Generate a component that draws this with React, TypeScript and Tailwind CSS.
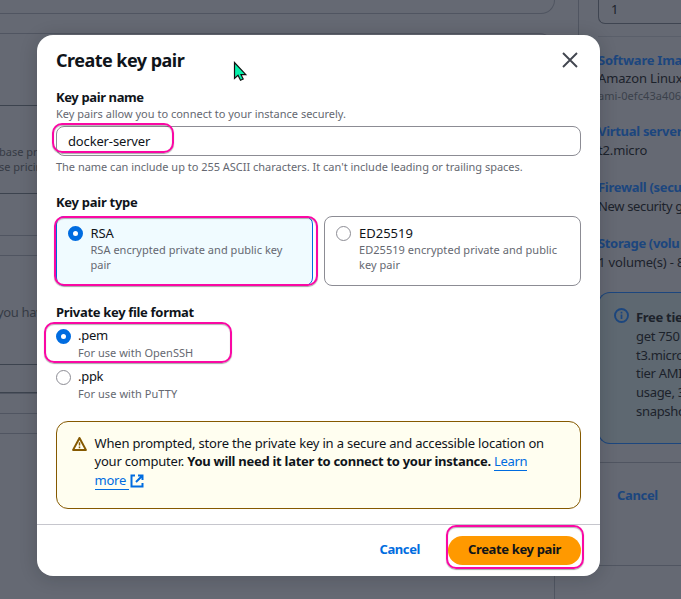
import type { ReactNode } from "react";

function RadioMark({ checked = false }: { checked?: boolean }) {
  return (
    <div className="flex h-[15px] w-[15px]">
      {checked ? (
        <span className="h-[15px] w-[15px] shrink-0 rounded-full border-[5px] border-[#006ce0] bg-white" />
      ) : (
        <span className="h-[15px] w-[15px] shrink-0 rounded-full border-[1.8px] border-[#8c8c94] bg-white" />
      )}
    </div>
  );
}

function Label({ children, className }: { children: ReactNode; className: string }) {
  return <div className={`h-[18px] text-[13px] font-bold leading-[18px] text-[#0f141a] ${className}`}>{children}</div>;
}

function WarningIcon() {
  return (
    <svg width="16" height="16" viewBox="0 0 16 16" fill="none" stroke="#855900" strokeLinejoin="round">
      <path d="M7.5 2 1.1 13.9h12.8L7.5 2Z" strokeWidth="2" />
      <path d="M7.5 6.2v3.4M7.5 10.6v1.6" strokeWidth="1.5" />
    </svg>
  );
}

function ExternalIcon() {
  return (
    <svg width="14" height="14" viewBox="0 0 14 14" fill="none" stroke="#006ce0" strokeWidth="2">
      <path d="M5 1.5H1.5v11h11V9M8 1.5h4.5V6M12.3 1.7 6 8" />
    </svg>
  );
}

function LeftColumn() {
  return (
    <div className="flex w-[555px] shrink-0 flex-col">
      <div className="h-[14px] rounded-br-[16px] border-b border-r border-[#505561]" />
      <div className="mt-[19px] flex h-[203px] flex-col rounded-tr-[16px] border border-l-0 border-[#505561]">
        <div className="mt-[71px] h-[89px] border-y border-[#3c434e] pt-[38px] text-[11px] leading-[15px] text-[#363b45]">
          <div className="-ml-px h-[15px] whitespace-nowrap">base pri</div>
          <div className="-ml-px h-[15px] whitespace-nowrap">se pricin</div>
        </div>
      </div>
      <div className="mt-[19px] flex h-[139px] flex-col border border-l-0 border-[#505561]">
        <div className="-ml-[3px] mt-[47px] h-[18px] text-[13px] leading-[18px] tracking-[-0.35px] text-[#363b45]">
          you have
        </div>
        <div className="mt-[43px] h-[30px] border-y border-[#3c434e]" />
      </div>
      <div className="mt-[19px] h-[21px] border-y border-[#505561]" />
      <div className="mt-[131px] h-[34px] border-r border-[#505561]" />
    </div>
  );
}

function SummaryColumn() {
  return (
    <div className="ml-[23px] flex h-[566px] w-[103px] shrink-0 flex-col overflow-hidden border-b border-l border-[#505561] pl-[19px] text-[13px] leading-[18px]">
      <div className="h-[24px] rounded-bl-[7px] border-b border-l border-[#3f4551] pl-[12px] text-[#1c222b]">1</div>
      <div className="mt-[12px] h-px bg-[#5a5f6a]" />
      <div className="mt-[14px] h-[18px] font-bold tracking-[-0.25px] text-[#1c467e]">Software Ima</div>
      <div className="h-[18px] tracking-[-0.15px] text-[#1c222b]">Amazon Linux</div>
      <div className="mt-px h-[16px] text-[11px] leading-[16px] tracking-[0.08px] text-[#3b414b]">ami-0efc43a406</div>
      <div className="mt-[18px] h-[18px] font-bold tracking-[-0.3px] text-[#1c467e]">Virtual server</div>
      <div className="mt-px h-[18px] tracking-[-0.15px] text-[#1c222b]">t2.micro</div>
      <div className="mt-[19px] h-[18px] font-bold tracking-[-0.3px] text-[#1c467e]">Firewall (secu</div>
      <div className="mt-px h-[18px] tracking-[-0.35px] text-[#1c222b]">New security g</div>
      <div className="mt-[19px] h-[18px] font-bold tracking-[-0.35px] text-[#1c467e]">Storage (volu</div>
      <div className="mt-px h-[18px] tracking-[-0.15px] text-[#1c222b]">1 volume(s) - 8</div>
      <div className="mt-[21px] flex h-[152px] rounded-l-[12px] border border-r-0 border-[#1c467e] bg-[#5e6871] pl-[15px] pt-[15px]">
        <svg width="15" height="15" viewBox="0 0 15 15" fill="none" stroke="#1c467e" className="shrink-0">
          <circle cx="7.5" cy="7.5" r="6.5" strokeWidth="1.9" />
          <path d="M7.5 6.5v4.5M7.5 3.8v1.6" strokeWidth="1.7" />
        </svg>
        <div className="ml-[7px] whitespace-nowrap text-[13px] leading-[18.8px] tracking-[-0.3px] text-[#1c222b]">
          <b>Free tie</b>
          <br />
          get 750
          <br />
          t3.micro
          <br />
          tier AMI
          <br />
          usage, 3
          <br />
          snapsho
        </div>
      </div>
      <div className="mt-[18px] h-px bg-[#505561]" />
      <div className="ml-[19px] mt-[23px] h-[18px] font-bold tracking-[-0.35px] text-[#1c467e]">Cancel</div>
    </div>
  );
}

function Marker({ className }: { className: string }) {
  return (
    <div
      className={`pointer-events-none absolute border-[2.5px] border-[#fa08a4] shadow-[0_1px_1px_rgba(0,0,0,0.35),inset_0_1px_1px_rgba(0,0,0,0.3)] ${className}`}
    />
  );
}

function Dialog() {
  return (
    <div className="absolute left-[37px] top-[35px] flex h-[541px] w-[563px] flex-col rounded-[16px] bg-white shadow-[0_2px_18px_rgba(15,20,26,0.2)]">
      <div className="flex h-[52px] justify-between pl-[19px] pr-[22px] pt-[13px]">
        <h1 className="text-[18px] font-bold leading-6 tracking-[-0.53px] text-[#0f141a]">Create key pair</h1>
        <svg width="16" height="16" viewBox="0 0 16 16" stroke="#424650" strokeWidth="1.9" className="mt-[4px]">
          <path d="m1 1 14 14M15 1 1 15" />
        </svg>
      </div>
      <div className="flex flex-col px-[19px] pt-px">
        <Label className="tracking-[-0.38px]">Key pair name</Label>
        <div className="h-[16px] text-[11px] leading-[16px] text-[#656871]">
          Key pairs allow you to connect to your instance securely.
        </div>
        <div className="mt-[4px] flex h-[30px] items-center rounded-[8px] border border-[#8c8c94] pl-[11px] pt-[2px] text-[13px] tracking-[-0.15px] text-[#0f141a]">
          docker-server
        </div>
        <div className="mt-[3px] h-[16px] text-[11px] leading-[16px] tracking-[-0.02px] text-[#656871]">
          The name can include up to 255 ASCII characters. It can't include leading or trailing spaces.
        </div>
        <Label className="mt-[18px] tracking-[-0.27px]">Key pair type</Label>
        <div className="mt-[5px] grid grid-cols-2 gap-[11px]">
          <div className="flex h-[70px] rounded-[8px] border border-[#006ce0] bg-[#f0fbff] pl-[11px] pt-[7px]">
            <div className="mt-[2px]">
              <RadioMark checked />
            </div>
            <div className="ml-[7.5px]">
              <div className="h-[18px] text-[13px] leading-[18px] tracking-[-0.1px] text-[#0f141a]">RSA</div>
              <div className="whitespace-nowrap text-[11px] leading-[15px] tracking-[0.03px] text-[#656871]">
                RSA encrypted private and public key
                <br />
                pair
              </div>
            </div>
          </div>
          <div className="flex h-[70px] rounded-[8px] border border-[#8c8c94] pl-[11px] pt-[7px]">
            <div className="mt-[2px]">
              <RadioMark />
            </div>
            <div className="ml-[8px]">
              <div className="h-[18px] text-[13px] leading-[18px] text-[#0f141a]">ED25519</div>
              <div className="whitespace-nowrap text-[11px] leading-[15px] tracking-[0.05px] text-[#656871]">
                ED25519 encrypted private and public
                <br />
                key pair
              </div>
            </div>
          </div>
        </div>
        <Label className="mt-[17px] tracking-[-0.32px]">Private key file format</Label>
        <div className="mt-[5px] flex">
          <div className="mt-[3px]">
            <RadioMark checked />
          </div>
          <div className="ml-[7px]">
            <div className="h-[18px] text-[13px] leading-[18px] tracking-[-0.3px] text-[#0f141a]">.pem</div>
            <div className="mt-px h-[16px] text-[11px] leading-[16px] tracking-[0.03px] text-[#656871]">
              For use with OpenSSH
            </div>
          </div>
        </div>
        <div className="mt-[6px] flex">
          <div className="mt-[3px]">
            <RadioMark />
          </div>
          <div className="ml-[7px]">
            <div className="h-[18px] text-[13px] leading-[18px] tracking-[-0.3px] text-[#0f141a]">.ppk</div>
            <div className="mt-px h-[16px] text-[11px] leading-[16px] tracking-[0.06px] text-[#656871]">
              For use with PuTTY
            </div>
          </div>
        </div>
        <div className="mt-[19px] flex h-[88px] rounded-[12px] border border-[#855900] bg-[#fffef0] pl-[15px] pt-[12px]">
          <div className="mt-[2px] shrink-0">
            <WarningIcon />
          </div>
          <div className="ml-[6.5px] whitespace-nowrap text-[13px] leading-[18px] text-[#0f141a]">
            <div className="tracking-[-0.19px]">
              When prompted, store the private key in a secure and accessible location on
            </div>
            <div className="tracking-[-0.2px]">
              your computer. <b className="tracking-[-0.28px]">You will need it later to connect to your instance.</b>{" "}
              <span className="border-b border-[#006ce0] tracking-[-0.35px] text-[#006ce0]">Learn</span>
            </div>
            <div className="mt-[2px] flex items-center text-[#006ce0]">
              <span className="whitespace-pre border-b border-[#006ce0] leading-[17px] tracking-[-0.25px]">more </span>
              <span className="ml-[0.5px]">
                <ExternalIcon />
              </span>
            </div>
          </div>
        </div>
      </div>
      <div className="mt-[15px] flex h-[52px] items-center justify-end border-t border-[#c6c6cd] pr-[19px] text-[13px] font-bold">
        <button className="h-[29px] pb-[2px] tracking-[-0.4px] text-[#006ce0]">Cancel</button>
        <button className="ml-[28px] h-[29px] w-[133px] rounded-full bg-[#ff9900] pb-[2px] tracking-[-0.35px] text-[#0f141a]">
          Create key pair
        </button>
      </div>
    </div>
  );
}

export default function App() {
  return (
    <div className="relative h-[599px] w-[681px] overflow-hidden bg-[#656973] font-['Noto_Sans',sans-serif]">
      <div className="flex whitespace-nowrap">
        <LeftColumn />
        <SummaryColumn />
      </div>
      <Dialog />
      <Marker className="left-[51.5px] top-[123px] h-[30px] w-[122px] rounded-[10px]" />
      <Marker className="left-[54px] top-[216px] h-[70px] w-[264px] rounded-[10px]" />
      <Marker className="left-[44px] top-[322px] h-[41px] w-[188px] rounded-[10px]" />
      <Marker className="left-[446px] top-[525px] h-[44px] w-[138px] rounded-[10px]" />
      <svg width="16" height="22" viewBox="0 0 16 22" className="absolute left-[233px] top-[61px]">
        <path
          d="M1.5 1.5V17.5l3.5-3.2L7.5 19.3l2.7-1.3-2.2-4.3h4.8L1.5 1.5Z"
          fill="#08f2ac"
          stroke="#111"
          strokeWidth="1.2"
        />
      </svg>
    </div>
  );
}
